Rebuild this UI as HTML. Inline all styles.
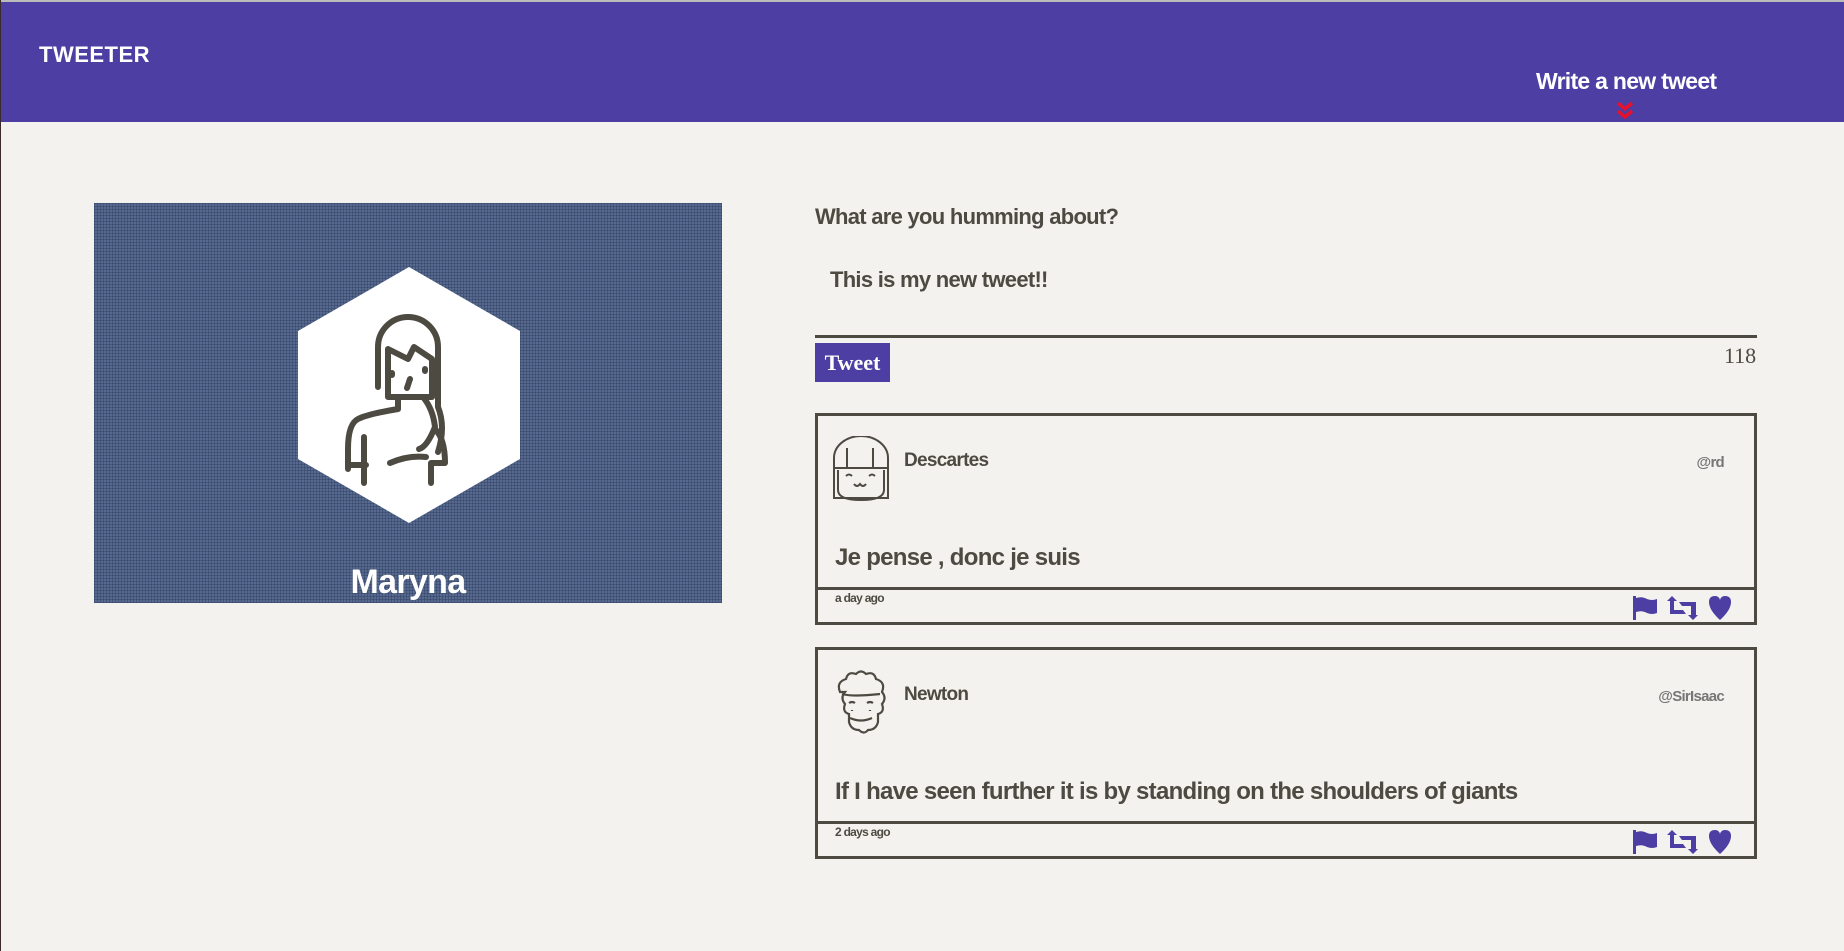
<!DOCTYPE html>
<html><head><meta charset="utf-8"><style>
*{margin:0;padding:0;box-sizing:border-box}
body{width:1844px;height:951px;background:#f4f2ee;font-family:"Liberation Sans",sans-serif;color:#4d4a42;position:relative;overflow:hidden;border-left:1px solid #3a2a2a;letter-spacing:-0.045em}
.top{position:absolute;left:0;top:0;width:1844px;height:2px;background:#bbb}
header{position:absolute;left:0;top:2px;width:1844px;height:120px;background:#4c3ea2}
.logo{position:absolute;left:38px;top:40px;color:#fff;font:bold 22px "Liberation Sans",sans-serif;letter-spacing:0.5px}
.write{position:absolute;left:1535px;top:66px;color:#fff;font-weight:bold;font-size:23px}
.chev{position:absolute;left:1615px;top:99px}
.profile{position:absolute;left:93px;top:203px;width:628px;height:400px;background-color:#566a90;background-image:repeating-linear-gradient(0deg,rgba(40,50,80,.35) 0 1px,transparent 1px 3px),repeating-linear-gradient(90deg,rgba(40,50,80,.35) 0 1px,transparent 1px 3px)}
.hex{position:absolute;left:204px;top:64px}
.name{position:absolute;left:0;width:628px;top:360px;text-align:center;color:#fff;font-weight:bold;font-size:34px;letter-spacing:-0.02em}
.q{position:absolute;left:814px;top:204px;font-weight:bold;font-size:22px}
.ta{position:absolute;left:814px;top:255px;width:942px;height:83px;border-bottom:3px solid #4d4a42}
.ta span{position:absolute;left:15px;top:12px;font-weight:bold;font-size:22px}
.btn{position:absolute;left:814px;top:343px;width:75px;height:39px;background:#4c3ea2;color:#fff;font:bold 22px "Liberation Serif",serif;text-align:center;line-height:39px;letter-spacing:0}
.cnt{position:absolute;left:1723px;top:343px;font:22px "Liberation Serif",serif;letter-spacing:0}
.tw{position:absolute;left:814px;width:942px;height:212px;border:3px solid #4d4a42}
.tw .sep{position:absolute;left:0;right:0;top:171px;height:3px;background:#4d4a42}
.tw .av{position:absolute;left:14px;top:20px}
.tw .nm{position:absolute;left:86px;top:34px;font-weight:bold;font-size:19px}
.tw .hd{position:absolute;right:30px;top:38px;font-weight:bold;font-size:15px;color:#777}
.tw .ct{position:absolute;left:17px;top:128px;font-weight:bold;font-size:24px}
.tw .ago{position:absolute;left:17px;top:175px;font-weight:bold;font-size:12px}
.tw .ic{position:absolute;left:813px;top:179px}
</style></head><body>
<div class="top"></div>
<header><div class="logo">TWEETER</div><div class="write">Write a new tweet</div>
<svg class="chev" width="18" height="20" viewBox="0 0 18 20"><path d="M2 2l7 6 7-6M2 10l7 6 7-6" fill="none" stroke="#e8102a" stroke-width="3.5"/></svg></header>

<div class="profile">
<svg class="hex" width="222" height="256" viewBox="0 0 222 256">
<polygon points="111,0 222,64 222,192 111,256 0,192 0,64" fill="#fff"/>
<g fill="none" stroke="#4d4a42" stroke-width="6" stroke-linecap="round" stroke-linejoin="round">
<path d="M80 120 V80 a30 30 0 0 1 60 0 V140 q8 20 0 45"/>
<path d="M90 82 l20 10 6-12 18 12 V130 H90 Z"/>
<path d="M94 108 v-2 M127 104 v-2 M112 112 l-3 9"/>
<path d="M100 130 v12 q-30 5-40 10 q-10 5-10 30 v20"/>
<path d="M125 130 q10 12 12 30 q-8 20-16 22"/>
<path d="M50 198 h18 M66 170 v46 M137 162 q10 10 10 34 h-14 M133 196 v20 M92 196 q18-8 36-6"/>
</g></svg>
<div class="name">Maryna</div>
</div>

<div class="q">What are you humming about?</div>
<div class="ta"><span>This is my new tweet!!</span></div>
<div class="btn">Tweet</div>
<div class="cnt">118</div>

<div class="tw" style="top:413px">
<svg class="av" width="58" height="66" viewBox="0 0 58 66"><g fill="none" stroke="#4d4a42" stroke-width="2"><path d="M2 62 V22 a27 22 0 0 1 54 0 V62 Z"/><path d="M2 32 h54 M15 12 v20 M41 12 v20"/><path d="M6 34 v20 q0 10 23 10 q23 0 23-10 v-20"/><path d="M14 40 q3-3 6 0 M37 40 q3-3 6 0 M22 48 q3 4 6 0 q3 4 6 0"/></g></svg>
<div class="nm">Descartes</div><div class="hd">@rd</div>
<div class="ct">Je pense , donc je suis</div>
<div class="sep"></div><div class="ago">a day ago</div>
<svg class="ic" width="105" height="26" viewBox="0 0 105 26"><g fill="#4c3ea2"><path d="M2 1h3v24H2z M5 3 q6-2 11 1 q5 2 10 0 v14 q-5 2-10 0 q-5-3-11-1z"/><path d="M36 6 l5-5 5 5h-3v9h9l3 4H39V6z M67 20 l-5 5-5-5h3v-9h-9l-3-4h17v13z"/><path d="M91 7 q0-6 6-6 q4 0 5 4 q1-4 5-4 q6 0 6 6 q0 8-11 18 q-11-10-11-18z" transform="translate(-13,0)"/></g></svg>
</div>

<div class="tw" style="top:647px">
<svg class="av" width="58" height="66" viewBox="0 0 58 66"><g fill="none" stroke="#4d4a42" stroke-width="2.2"><path d="M8 22 q-4-10 6-13 q2-8 10-5 q5-5 10 0 q8-3 10 5 q10 3 6 13 q5 6 0 12 q3 8-4 10 v8 q-2 8-10 8 q-4 5-9 0 q-8 0-10-8 v-8 q-7-2-4-10 q-5-6 0-12z"/><path d="M10 24 q10 3 38 0"/><path d="M17 33 q3-2 6 0 M35 33 q3-2 6 0 M20 40 v1 M38 40 v1 M18 48 q11 5 22 0"/></g></svg>
<div class="nm">Newton</div><div class="hd">@SirIsaac</div>
<div class="ct">If I have seen further it is by standing on the shoulders of giants</div>
<div class="sep"></div><div class="ago">2 days ago</div>
<svg class="ic" width="105" height="26" viewBox="0 0 105 26"><g fill="#4c3ea2"><path d="M2 1h3v24H2z M5 3 q6-2 11 1 q5 2 10 0 v14 q-5 2-10 0 q-5-3-11-1z"/><path d="M36 6 l5-5 5 5h-3v9h9l3 4H39V6z M67 20 l-5 5-5-5h3v-9h-9l-3-4h17v13z"/><path d="M91 7 q0-6 6-6 q4 0 5 4 q1-4 5-4 q6 0 6 6 q0 8-11 18 q-11-10-11-18z" transform="translate(-13,0)"/></g></svg>
</div>
</body></html>
